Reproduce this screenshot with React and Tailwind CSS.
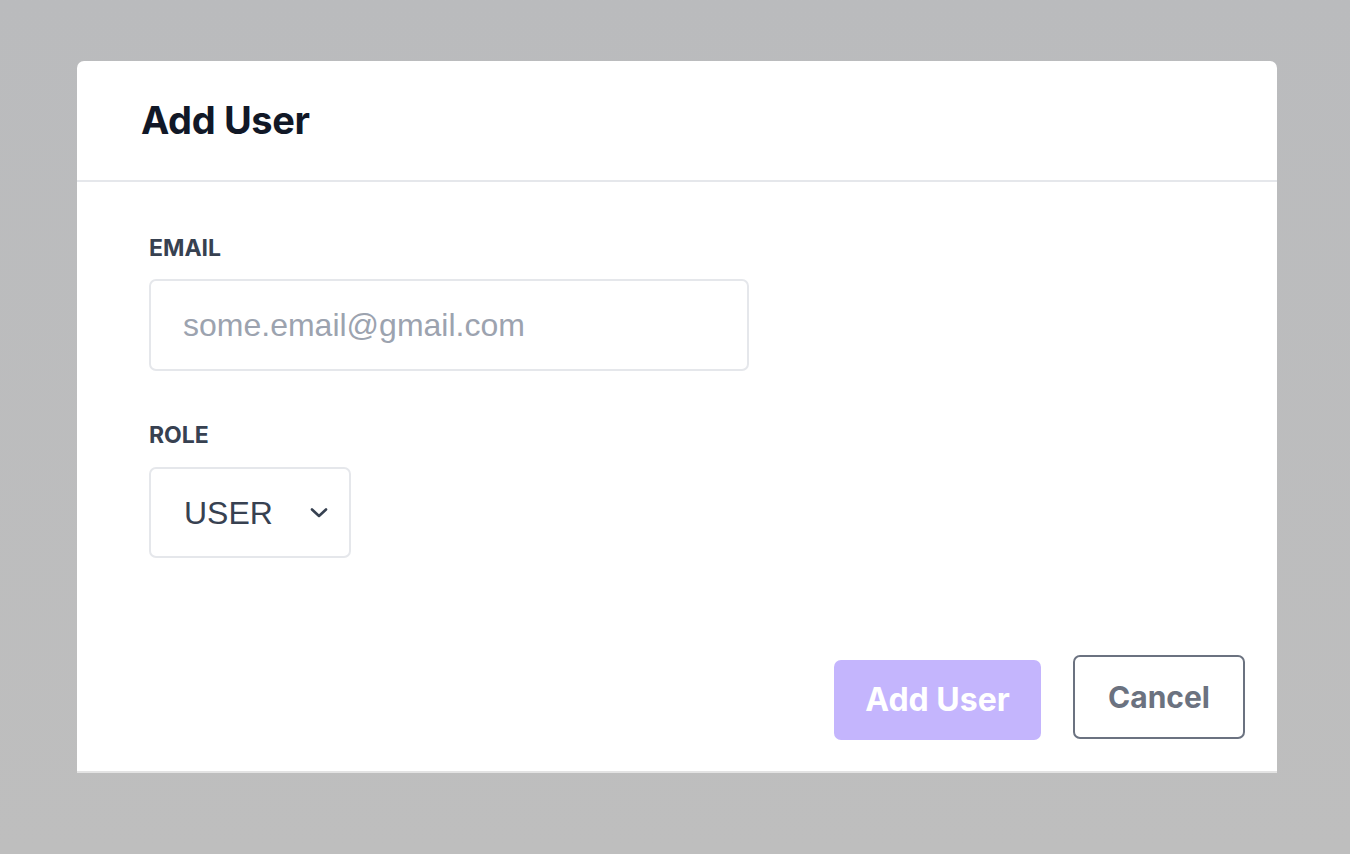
import { useState } from 'react';

export default function App() {
  const [email, setEmail] = useState('');
  const [role, setRole] = useState('USER');

  return (
    <div className="min-h-screen w-full bg-gradient-to-b from-[#babbbd] to-[#bebebe] pt-[61px] pl-[77px] font-['Inter',sans-serif]">
      <div className="w-[1200px] h-[712px] bg-white rounded-t-[7px] border-b-2 border-[#e3e3e3] flex flex-col">
        <div className="h-[121px] shrink-0 border-b-2 border-[#e5e7eb] flex items-center pl-[64px]">
          <h1 className="text-[38px] font-bold text-[#111827] tracking-[-0.01em]">Add User</h1>
        </div>

        <div className="flex-1 flex flex-col pl-[72px] pr-[32px] pt-[52px] pb-[31px]">
          <label className="text-[23px] leading-[28px] font-bold text-[#374151]">EMAIL</label>
          <input
            value={email}
            onChange={(e) => setEmail(e.target.value)}
            placeholder="some.email@gmail.com"
            className="mt-[17px] w-[600px] h-[92px] border-2 border-[#e5e7eb] rounded-[7px] px-[32px] text-[32px] text-[#374151] placeholder:text-[#9ca3af] font-['Liberation_Sans',Arial,sans-serif] outline-none"
          />

          <label className="mt-[50px] text-[23px] leading-[28px] font-bold text-[#374151]">ROLE</label>
          <div className="mt-[18px] relative w-[202px] h-[91px]">
            <select
              value={role}
              onChange={(e) => setRole(e.target.value)}
              className="appearance-none w-full h-full border-2 border-[#e5e7eb] rounded-[7px] pl-[33px] text-[32px] text-[#374151] bg-white font-['Liberation_Sans',Arial,sans-serif] outline-none"
            >
              <option>USER</option>
              <option>ADMIN</option>
            </select>
            <svg
              className="absolute right-[23px] top-[41px] pointer-events-none"
              width="18"
              height="10"
              viewBox="0 0 18 10"
              fill="none"
            >
              <polyline points="2,1.5 9,8 16,1.5" stroke="#374151" strokeWidth="2.6" strokeLinecap="round" strokeLinejoin="round" />
            </svg>
          </div>

          <div className="mt-auto flex justify-end items-end gap-[32px]">
            <button className="w-[207px] h-[80px] rounded-[7px] bg-[#c4b5fd] text-white text-[32px] font-bold">
              Add User
            </button>
            <button className="w-[172px] h-[84px] mb-px rounded-[7px] border-2 border-[#6b7280] bg-white text-[#6b7280] text-[30px] font-bold">
              Cancel
            </button>
          </div>
        </div>
      </div>
    </div>
  );
}
